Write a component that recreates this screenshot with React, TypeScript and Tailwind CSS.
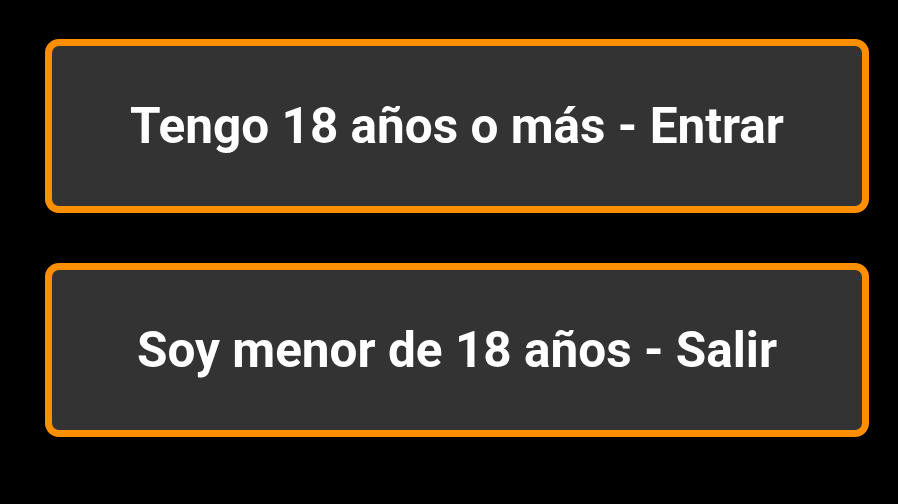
export default function App() {
  const buttons = ['Tengo 18 años o más - Entrar', 'Soy menor de 18 años - Salir'];
  return (
    <div className="w-[898px] h-[504px] bg-black pt-[39px] pl-[45px] pr-[29px] flex flex-col gap-[50px]" style={{ fontFamily: 'Roboto, "Liberation Sans", sans-serif' }}>
      {buttons.map((label) => (
        <button
          key={label}
          className="h-[174px] w-full rounded-[14px] border-[7px] border-[#ff8f00] bg-[#333333] text-white font-bold text-[49.5px] flex items-center justify-center"
        >
          {label}
        </button>
      ))}
    </div>
  );
}
